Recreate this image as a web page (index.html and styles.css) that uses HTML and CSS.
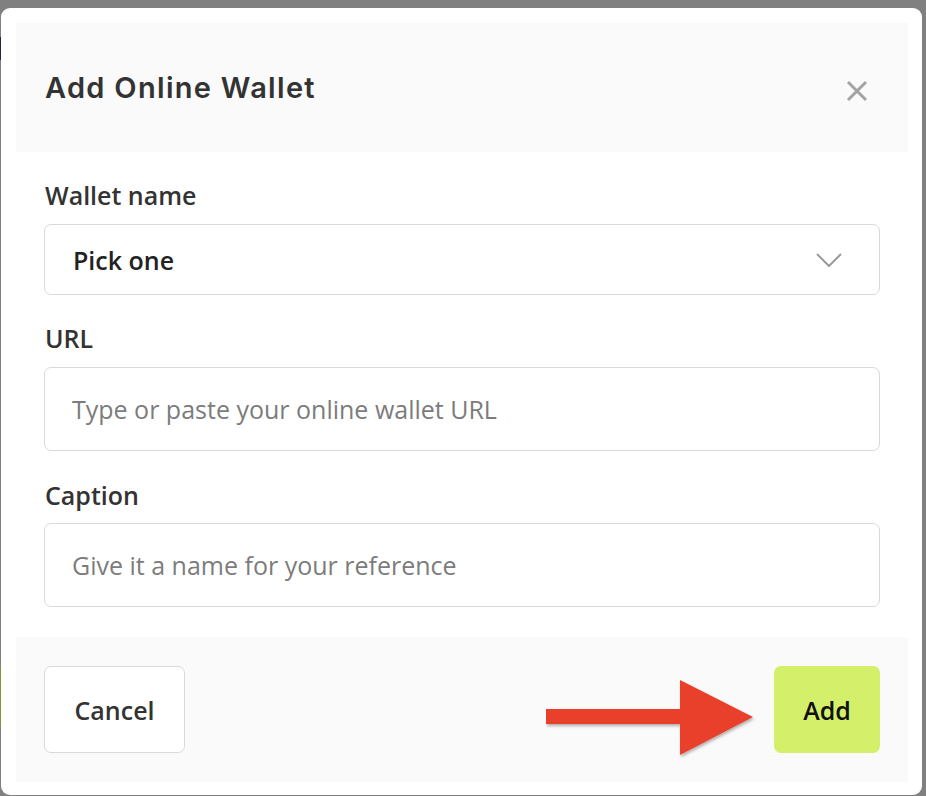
FILE: index.html
```html
<!DOCTYPE html>
<html lang="en">
<head>
<meta charset="utf-8">
<title>Add Online Wallet</title>
<link rel="stylesheet" href="styles.css">
</head>
<body>
<div class="modal">
  <div class="modal-header">
    <h2 class="title">Add Online Wallet</h2>
    <button class="close" aria-label="Close">
      <svg width="22" height="22" viewBox="0 0 22 22"><path d="M2 2 L20 20 M20 2 L2 20" stroke="#a3a3a3" stroke-width="3" fill="none"/></svg>
    </button>
  </div>
  <div class="modal-body">
    <label class="label">Wallet name</label>
    <div class="select">
      <span class="select-value">Pick one</span>
      <svg class="chevron" width="26" height="14" viewBox="0 0 26 14"><path d="M1 1 L13 13 L25 1" stroke="#9a9a9a" stroke-width="2" fill="none"/></svg>
    </div>
    <label class="label gap">URL</label>
    <input class="input" type="text" placeholder="Type or paste your online wallet URL">
    <label class="label gap2">Caption</label>
    <input class="input" type="text" placeholder="Give it a name for your reference">
  </div>
  <div class="modal-footer">
    <button class="btn btn-cancel">Cancel</button>
    <button class="btn btn-add">Add</button>
    <svg class="arrow" width="214" height="82" viewBox="0 0 214 82">
      <defs>
        <filter id="sh" x="-10%" y="-10%" width="130%" height="130%">
          <feDropShadow dx="1" dy="2" stdDeviation="1.5" flood-color="#000" flood-opacity="0.3"/>
        </filter>
      </defs>
      <path d="M0 29 H134 V0 L207 37 L134 75 V44 H0 Z" fill="#e8412a" filter="url(#sh)"/>
    </svg>
  </div>
</div>
</body>
</html>
```
FILE: styles.css
```css
html, body {
  margin: 0;
  padding: 0;
}
body {
  width: 926px;
  height: 796px;
  overflow: hidden;
  background-color: #808080;
  background-image:
    linear-gradient(#2d1f4a, #2d1f4a),
    linear-gradient(#7d973b, #7d973b);
  background-repeat: no-repeat;
  background-size: 1px 23px, 1px 60px;
  background-position: 0 37px, 0 667px;
  font-family: "Open Sans", "Noto Sans", sans-serif;
  color: #333;
}
.modal {
  margin: 8px 0 0 1px;
  width: 921px;
  height: 787px;
  box-sizing: border-box;
  padding: 15px 14px 13px 15px;
  background: #fff;
  border-radius: 9px;
  display: flex;
  flex-direction: column;
}
.modal-header {
  height: 129px;
  flex: none;
  background: #fafafa;
  display: flex;
  align-items: center;
  justify-content: space-between;
  padding: 0 40px 0 29px;
}
.title {
  margin: 0;
  font-family: "Inter", "Noto Sans", sans-serif;
  font-weight: 600;
  font-size: 29px;
  letter-spacing: 1.3px;
  color: #333;
}
.close {
  border: 0;
  background: none;
  padding: 0;
  width: 22px;
  height: 22px;
  margin-top: 6px;
  display: block;
}
.close svg { display: block; }
.modal-body {
  flex: 1;
  padding: 26px 28px 0 28px;
  display: flex;
  flex-direction: column;
}
.label {
  display: block;
  font-weight: 600;
  font-size: 25px;
  line-height: 34px;
  color: #333;
  margin-bottom: 12px;
  padding-left: 1px;
}
.label.gap { margin-top: 26px; }
.label.gap2 { margin-top: 27px; margin-bottom: 11px; }
.select {
  height: 71px;
  box-sizing: border-box;
  border: 1px solid #d9d9d9;
  border-radius: 7px;
  display: flex;
  align-items: center;
  justify-content: space-between;
  padding: 0 37px 0 28px;
}
.select-value {
  font-weight: 600;
  font-size: 25px;
  line-height: 34px;
  color: #222;
}
.chevron { display: block; }
.input {
  display: block;
  width: 100%;
  height: 84px;
  box-sizing: border-box;
  border: 1px solid #d9d9d9;
  border-radius: 7px;
  padding: 0 27px;
  font-family: "Open Sans", "Noto Sans", sans-serif;
  font-size: 25px;
  color: #333;
  background: #fff;
  outline: none;
}
.input::placeholder {
  color: #7c7c7c;
  opacity: 1;
}
.modal-footer {
  position: relative;
  height: 145px;
  flex: none;
  box-sizing: border-box;
  background: #fafafa;
  display: flex;
  align-items: center;
  justify-content: space-between;
  padding: 0 28px;
}
.btn {
  height: 87px;
  border-radius: 7px;
  font-family: "Open Sans", "Noto Sans", sans-serif;
  font-weight: 600;
  font-size: 25px;
  cursor: pointer;
}
.btn-cancel {
  width: 141px;
  background: #fff;
  border: 1px solid #d9d9d9;
  color: #333;
}
.btn-add {
  width: 106px;
  background: #d4f06a;
  border: 0;
  color: #111;
}
.arrow {
  position: absolute;
  left: 530px;
  top: 43px;
}
```
